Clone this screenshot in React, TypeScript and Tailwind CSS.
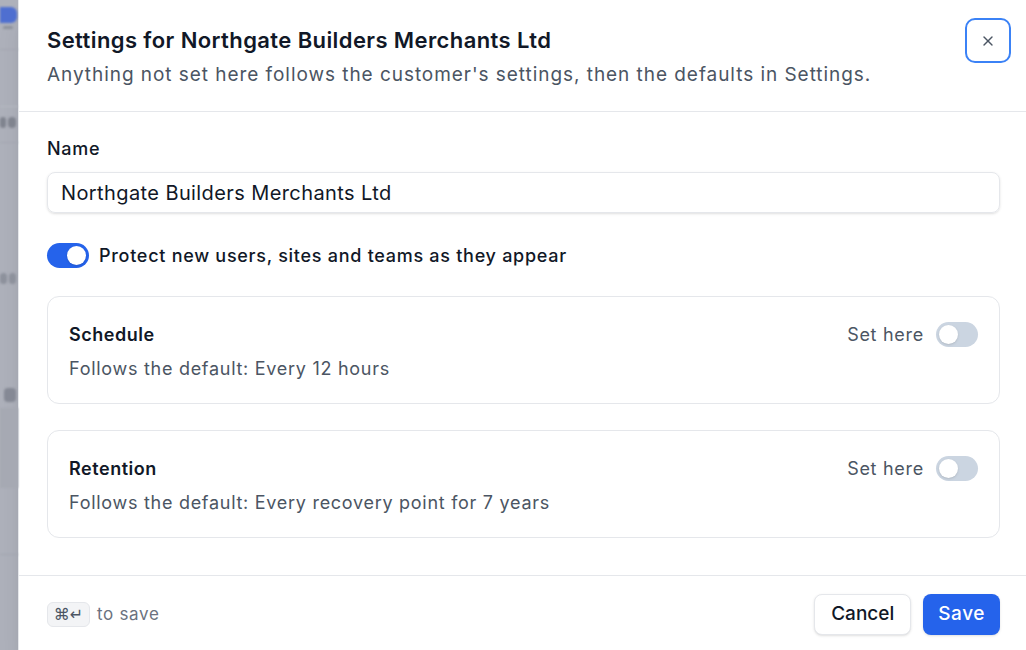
import { useState } from 'react';
import { X } from 'lucide-react';

function Toggle({ on, onChange }: { on: boolean; onChange: () => void }) {
  return (
    <button
      type="button"
      onClick={onChange}
      className={`relative inline-flex h-[25px] w-[42px] flex-none items-center rounded-full transition-colors ${
        on ? 'bg-[#2563eb]' : 'bg-[#cbd5e1]'
      }`}
    >
      <span
        className={`block h-[19px] w-[19px] rounded-full bg-white shadow-sm transition-transform ${
          on ? 'translate-x-[20px]' : 'translate-x-[3px]'
        }`}
      />
    </button>
  );
}

function OverrideCard({ title, desc }: { title: string; desc: string }) {
  const [on, setOn] = useState(false);
  return (
    <div className="rounded-xl border border-[#e5e7eb] px-[21px] pt-[25px] pb-[22px]">
      <div className="flex items-center justify-between">
        <div className="text-[18px] font-semibold leading-6 tracking-[0.03em] text-[#111827]">{title}</div>
        <div className="flex items-center gap-3">
          <span className="text-[18px] leading-6 tracking-[0.04em] text-[#4b5563]">Set here</span>
          <Toggle on={on} onChange={() => setOn(!on)} />
        </div>
      </div>
      <div className="mt-[10px] text-[18px] leading-6 tracking-[0.04em] text-[#4b5563]">{desc}</div>
    </div>
  );
}

export default function App() {
  const [protect, setProtect] = useState(true);
  const [name, setName] = useState('Northgate Builders Merchants Ltd');

  return (
    <div
      className="flex h-[650px] w-full overflow-hidden bg-[#aeb1bb]"
      style={{ fontFamily: 'Inter, "Noto Sans", sans-serif' }}
    >
      {/* dimmed page behind the dialog */}
      <div className="flex w-[18px] flex-none flex-col overflow-hidden blur-[1.2px]">
        <div className="ml-[-8px] mt-[7px] h-[16px] w-[25px] rounded-md bg-[#4f6fd0]" />
        <div className="ml-[3px] mt-[3px] h-[3px] w-[10px] rounded-sm bg-[#8d919c]" />
        <div className="mt-[20px] h-[1px] w-full bg-[#a3a6b0]" />
        <div className="mt-[56px] h-[1px] w-full bg-[#b8bbc3]" />
        <div className="mt-[10px] flex gap-[2px]">
          <div className="h-[11px] w-[6px] rounded-sm bg-[#80848f]" />
          <div className="h-[11px] w-[8px] rounded-sm bg-[#80848f]" />
        </div>
        <div className="mt-[14px] h-[1px] w-full bg-[#a3a6b0]" />
        <div className="mt-[130px] flex gap-[2px]">
          <div className="h-[11px] w-[7px] rounded-sm bg-[#8d919c]" />
          <div className="h-[11px] w-[7px] rounded-sm bg-[#8d919c]" />
        </div>
        <div className="ml-[4px] mt-[104px] h-[14px] w-[12px] rounded-sm bg-[#858995]" />
        <div className="mt-[6px] h-[80px] w-full bg-[#a6a9b3]" />
        <div className="mt-[66px] h-[1px] w-full bg-[#a2a5af]" />
      </div>

      <div className="flex h-[650px] w-[1010px] flex-none flex-col border-l border-[#e5e7eb] bg-white shadow-xl">
        {/* header */}
        <div className="flex items-start justify-between border-b border-[#e5e7eb] pl-[28px] pr-[17px] pt-[18px] pb-[22px]">
          <div className="mt-[8px]">
            <h2 className="text-[22px] font-semibold leading-7 tracking-[0.4px] text-[#111827]">
              Settings for Northgate Builders Merchants Ltd
            </h2>
            <p className="mt-[7px] text-[19px] leading-7 tracking-[0.05em] text-[#4b5563]">
              Anything not set here follows the customer's settings, then the defaults in Settings.
            </p>
          </div>
          <button
            type="button"
            className="flex h-[45px] w-[46px] flex-none items-center justify-center rounded-[10px] border-2 border-[#3b82f6] text-[#4b5563]"
          >
            <X size={16} strokeWidth={2} />
          </button>
        </div>

        {/* body */}
        <div className="flex flex-1 flex-col pl-[28px] pr-[28px] pt-[25px]">
          <label className="text-[18px] font-medium leading-6 tracking-[0.04em] text-[#111827]">Name</label>
          <input
            value={name}
            onChange={(e) => setName(e.target.value)}
            className="mt-[11px] h-[41px] w-full rounded-lg border border-[#e5e7eb] px-[13px] text-[20px] tracking-[0.02em] text-[#111827] shadow-sm outline-none"
          />

          <div className="mt-[30px] flex items-center gap-[10px]">
            <Toggle on={protect} onChange={() => setProtect(!protect)} />
            <span className="text-[18px] font-medium leading-6 tracking-[0.04em] text-[#111827]">
              Protect new users, sites and teams as they appear
            </span>
          </div>

          <div className="mt-[28px] flex flex-col gap-[26px]">
            <OverrideCard title="Schedule" desc="Follows the default: Every 12 hours" />
            <OverrideCard title="Retention" desc="Follows the default: Every recovery point for 7 years" />
          </div>
        </div>

        {/* footer */}
        <div className="flex items-center justify-between border-t border-[#e5e7eb] pl-[28px] pr-[28px] pt-[18px] pb-[15px]">
          <div className="flex items-center gap-[7px]">
            <kbd
              className="flex h-[25px] w-[43px] items-center justify-center gap-[2px] rounded-md border border-[#e5e7eb] bg-[#f3f4f6] text-[16px] leading-none text-[#4b5563]"
              style={{ fontFamily: '"DejaVu Sans", sans-serif' }}
            >
              ⌘↵
            </kbd>
            <span className="text-[17px] tracking-[0.04em] text-[#6b7280]">to save</span>
          </div>
          <div className="flex items-center gap-3">
            <button
              type="button"
              className="h-[41px] rounded-lg border border-[#e5e7eb] bg-white px-[16px] text-[19px] font-medium text-[#111827] shadow-sm"
            >
              Cancel
            </button>
            <button
              type="button"
              className="h-[41px] rounded-lg bg-[#2563eb] px-[15px] text-[19px] font-medium tracking-[0.03em] text-white shadow-sm"
            >
              Save
            </button>
          </div>
        </div>
      </div>
    </div>
  );
}
